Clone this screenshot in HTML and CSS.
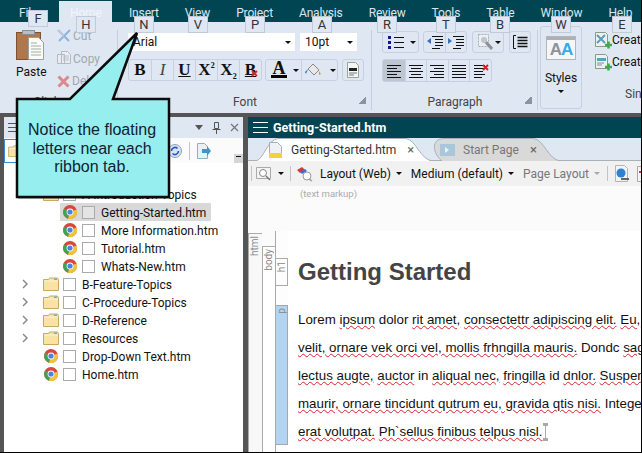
FILE: index.html
```html
<!DOCTYPE html>
<html lang="en">
<head>
    <meta charset="UTF-8">
    <title>Getting-Started.htm</title>
    <link rel="stylesheet" href="styles.css">
</head>
<body>

<svg class="defs" width="0" height="0">
    <symbol id="chrome" viewBox="0 0 14 14">
        <circle cx="7" cy="7" r="7" fill="#d8473b"/>
        <path d="M7 7L1.2 3.6A7 7 0 0 0 5 13.7Z" fill="#3fa353"/>
        <path d="M7 7L13.6 4.6A7 7 0 0 1 5 13.7Z" fill="#f0c33c"/>
        <circle cx="7" cy="7" r="3.400" fill="#fff"/>
        <circle cx="7" cy="7" r="2.600" fill="#4a84e0"/>
    </symbol>
    <symbol id="folder" viewBox="0 0 16 14">
        <path d="M.5 2.500h5l1 -1.500h8l1 1.500v11h-15z" fill="#f8e2a4" stroke="#c9a860"/>
        <path d="M1 4h14" stroke="#fdf3d0"/>
        <path d="M11 1.500h3v1.500h-3z" fill="#6aa9d8"/>
    </symbol>
    <symbol id="lines" viewBox="0 0 16 14">
        <path d="M1 1.500h14M1 4.500h14M1 7.500h14M1 10.500h14M1 13.500h14" stroke="#111"/>
    </symbol>
</svg>

<div class="app">

    <nav class="tabs">
        <span class="tab tab-file">File</span>
        <span class="tab tab-home">Home</span>
        <span class="tab">Insert</span>
        <span class="tab">View</span>
        <span class="tab">Project</span>
        <span class="tab">Analysis</span>
        <span class="tab">Review</span>
        <span class="tab">Tools</span>
        <span class="tab">Table</span>
        <span class="tab">Window</span>
        <span class="tab">Help</span>
    </nav>

    <section class="ribbon">

        <div class="group group-clip">
            <div class="group-body clip-body">
                <div class="paste">
                    <svg width="28" height="31" viewBox="0 0 28 31">
                        <rect x=".5" y="2.500" width="24" height="27" fill="#b0764c" stroke="#7d5233"/>
                        <rect x="6.500" y=".5" width="12" height="4" fill="#b9bec4" stroke="#8a8f95"/>
                        <path d="M12.500 7.500h10l5 5v17h-15z" fill="#fbfcf8" stroke="#9aa39a"/>
                        <path d="M15 13h6M15 16h10M15 19h10M15 22h10M15 25h10" stroke="#9fae9f"/>
                    </svg>
                    <span>Paste</span>
                </div>
                <div class="clip-list">
                    <div class="clip-item">
                        <svg width="14" height="14" viewBox="0 0 14 14"><path d="M1 1l11 11M13 1L2 12" stroke="#8fb3dc" stroke-width="2"/><path d="M1 1l6 6" stroke="#c9ced6" stroke-width="1.500"/></svg>
                        <span>Cut</span>
                    </div>
                    <div class="clip-item">
                        <svg width="14" height="15" viewBox="0 0 14 15"><path d="M.5 3.500h7v9h-7zM4.500 .5h6l3 3v9h-9z" fill="#e9edf3" stroke="#b4bac2"/><path d="M6 5h6M6 7h6M6 9h6" stroke="#bcc2ca"/></svg>
                        <span>Copy</span>
                    </div>
                    <div class="clip-item">
                        <svg width="13" height="13" viewBox="0 0 13 13"><path d="M1.500 1.500l10 10M11.500 1.500l-10 10" stroke="#da8a8a" stroke-width="3"/></svg>
                        <span>Delete</span>
                    </div>
                </div>
            </div>
            <div class="group-label">Clipboard</div>
        </div>

        <div class="group group-font">
            <div class="group-body font-body">
                <div class="combos">
                    <div class="combo combo-font">Arial<i class="caret"></i></div>
                    <div class="combo combo-size">10pt<i class="caret"></i></div>
                </div>
                <div class="tools-row">
                    <div class="btn-set">
                        <span class="btn serif"><b>B</b></span>
                        <span class="btn serif"><em class="thin">I</em></span>
                        <span class="btn serif"><b class="under">U</b></span>
                        <span class="btn serif"><b>X<sup>2</sup></b></span>
                        <span class="btn serif"><b>X<sub>2</sub></b></span>
                        <span class="btn serif"><b class="under">B</b><svg class="mini-x" width="7" height="7" viewBox="0 0 7 7"><path d="M1 1l5 5M6 1L1 6" stroke="#d6262b" stroke-width="1.800"/></svg></span>
                    </div>
                    <div class="btn-set color-set">
                        <span class="btn btn-color serif"><b>A</b><i class="swatch"></i></span>
                        <i class="caret caret-gap"></i>
                        <span class="btn btn-fill">
                            <svg width="17" height="15" viewBox="0 0 17 15"><path d="M8 1l6 6-5 5-6-6z" fill="#e8e8e8" stroke="#888"/><path d="M3 6L0 9l1 2z" fill="#2f6fd0"/><path d="M14 8l2 3-2 1z" fill="#d99a2b"/></svg>
                        </span>
                        <i class="caret caret-gap2"></i>
                    </div>
                    <div class="btn-set doc-set">
                        <span class="btn">
                            <svg width="12" height="16" viewBox="0 0 12 16"><path d="M.5 .5h8l3 3v12h-11z" fill="#f4f6f4" stroke="#9aa39a"/><path d="M2 6h8v3H2z" fill="#222"/><path d="M2 11h8M2 13h5" stroke="#778"/></svg>
                        </span>
                    </div>
                </div>
            </div>
            <div class="group-label">Font<i class="launcher"></i></div>
        </div>

        <div class="group group-para">
            <div class="group-body para-body">
                <div class="tools-row para-top">
                    <div class="btn-set list-set">
                        <svg width="16" height="14" viewBox="0 0 16 14"><path d="M0 1h3v3H0zM0 6h3v3H0zM0 11h3v3H0z" fill="#15158c"/><path d="M6 2.500h10M6 7.500h10M6 12.500h10" stroke="#111"/></svg>
                        <i class="caret"></i>
                    </div>
                    <div class="btn-set">
                        <span class="btn btn-indent"><svg width="16" height="14" viewBox="0 0 16 14"><path d="M5 1.500h11M8 4.500h8M8 7.500h8M8 10.500h8M5 13.500h8" stroke="#111"/><path d="M0 6l4-3v6z" fill="#3a6fc0"/></svg></span>
                        <span class="btn btn-indent"><svg width="16" height="14" viewBox="0 0 16 14"><path d="M5 1.500h11M8 4.500h8M8 7.500h8M8 10.500h8M5 13.500h8" stroke="#111"/><path d="M4 6L0 3v6z" fill="#3a6fc0"/></svg></span>
                    </div>
                    <div class="btn-set wrench-set">
                        <svg width="15" height="16" viewBox="0 0 15 16"><path d="M.5 .5h10v12H.5z" fill="#eceff3" stroke="#a9adb3" stroke-dasharray="2 1"/><path d="M6 6l8 9" stroke="#8d9198" stroke-width="3"/><circle cx="6" cy="6" r="3" fill="#c1c5ca"/></svg>
                        <i class="caret"></i>
                    </div>
                    <div class="btn-set bracket-set">
                        <svg width="15" height="14" viewBox="0 0 15 14"><path d="M3 .5H.5v13H3" fill="none" stroke="#111"/><path d="M4.500 2.500h10M4.500 5.500h10M4.500 8.500h10M4.500 11.500h10" stroke="#111" stroke-width="1.300"/></svg>
                    </div>
                </div>
                <div class="btn-set align-set">
                    <span class="btn btn-on"><svg width="16" height="14" viewBox="0 0 16 14"><path d="M1 1.500h14M1 4.500h10M1 7.500h14M1 10.500h10M1 13.500h14" stroke="#111"/></svg></span>
                    <span class="btn"><svg width="16" height="14" viewBox="0 0 16 14"><path d="M1 1.500h14M3 4.500h10M1 7.500h14M3 10.500h10M1 13.500h14" stroke="#111"/></svg></span>
                    <span class="btn"><svg width="16" height="14" viewBox="0 0 16 14"><path d="M1 1.500h14M5 4.500h10M1 7.500h14M5 10.500h10M1 13.500h14" stroke="#111"/></svg></span>
                    <span class="btn"><svg width="16" height="14" viewBox="0 0 16 14"><use href="#lines"/></svg></span>
                    <span class="btn"><svg width="16" height="14" viewBox="0 0 16 14"><path d="M1 1.500h11M1 4.500h11M1 7.500h9M1 10.500h11M1 13.500h8" stroke="#111"/><path d="M10 1l5 5M15 1l-5 5" stroke="#e2161c" stroke-width="1.800"/></svg></span>
                </div>
            </div>
            <div class="group-label">Paragraph<i class="launcher"></i></div>
        </div>

        <div class="group-styles">
            <div class="styles-box">
                <div class="styles-icon"><span class="a-grey">A</span><span class="a-blue">A</span></div>
                <span>Styles</span>
                <i class="caret"></i>
            </div>
        </div>

        <div class="group-single">
            <div class="create-item">
                <svg width="17" height="17" viewBox="0 0 17 17"><path d="M.5 .5h10l2 2v12H.5z" fill="#eef2ee" stroke="#8a9a8a"/><path d="M2 3l8 8M10 3l-8 8" stroke="#5f9bc0" stroke-width="2"/><path d="M10 13h7M13.500 9.500v7" stroke="#3faa4a" stroke-width="2.500"/></svg>
                <span>Create</span>
            </div>
            <div class="create-item">
                <svg width="17" height="17" viewBox="0 0 17 17"><path d="M.5 .5h10l2 2v12H.5z" fill="#eef2ee" stroke="#8a9a8a"/><path d="M2 4h9v3H2z" fill="#4fa8b4"/><path d="M2 9h7M2 11h5" stroke="#889"/><path d="M10 13h7M13.500 9.500v7" stroke="#3faa4a" stroke-width="2.500"/></svg>
                <span>Create</span>
            </div>
            <div class="single-label">Single</div>
        </div>
    </section>

    <main class="main">

        <aside class="pane">
            <div class="pane-head">
                <div class="burger burger-dark"><i></i><i></i><i></i></div>
                <div class="pane-ctrls">
                    <i class="caret caret-big"></i>
                    <svg width="9" height="12" viewBox="0 0 9 12"><path d="M2.500 .5h4v6h-4zM.5 7.500h8M4.500 8v4" fill="none" stroke="#555"/></svg>
                    <svg width="9" height="9" viewBox="0 0 9 9"><path d="M1 1l7 7M8 1L1 8" stroke="#777" stroke-width="1.200"/></svg>
                </div>
            </div>
            <div class="pane-tools">
                <span class="folder-btn"><svg width="14" height="12"><use href="#folder"/></svg></span>
                <svg class="sync" width="14" height="14" viewBox="0 0 14 14"><circle cx="7" cy="7" r="6.500" fill="#d8e4f4" stroke="#8ea0b8"/><path d="M3.500 7a3.500 3.500 0 0 1 6-2.500M10.500 7a3.500 3.500 0 0 1-6 2.500" fill="none" stroke="#2756c4" stroke-width="1.600"/></svg>
                <i class="sep"></i>
                <svg class="doc-arrow" width="14" height="16" viewBox="0 0 14 16"><path d="M.5 .5h7l3 3v12H.5z" fill="#e8f1f6" stroke="#8fb0c4"/><path d="M5 6h5V3l4 5-4 5v-3H5z" fill="#3a95d0"/></svg>
                <i class="overflow"></i>
            </div>
            <div class="tree">
                <div class="row"><span class="chev">&nbsp;</span><div class="row-body"><svg class="tree-icon" width="16" height="14"><use href="#folder"/></svg><i class="check"></i><span>A-Introduction-Topics</span></div></div>
                <div class="row child"><div class="row-body row-sel"><svg class="tree-icon" width="14" height="14"><use href="#chrome"/></svg><i class="check"></i><span>Getting-Started.htm</span></div></div>
                <div class="row child"><div class="row-body"><svg class="tree-icon" width="14" height="14"><use href="#chrome"/></svg><i class="check"></i><span>More Information.htm</span></div></div>
                <div class="row child"><div class="row-body"><svg class="tree-icon" width="14" height="14"><use href="#chrome"/></svg><i class="check"></i><span>Tutorial.htm</span></div></div>
                <div class="row child"><div class="row-body"><svg class="tree-icon" width="14" height="14"><use href="#chrome"/></svg><i class="check"></i><span>Whats-New.htm</span></div></div>
                <div class="row"><span class="chev"><svg width="6" height="10" viewBox="0 0 6 10"><path d="M1 1l4 4-4 4" fill="none" stroke="#8a8a8a" stroke-width="1.500"/></svg></span><div class="row-body"><svg class="tree-icon" width="16" height="14"><use href="#folder"/></svg><i class="check"></i><span>B-Feature-Topics</span></div></div>
                <div class="row"><span class="chev"><svg width="6" height="10" viewBox="0 0 6 10"><path d="M1 1l4 4-4 4" fill="none" stroke="#8a8a8a" stroke-width="1.500"/></svg></span><div class="row-body"><svg class="tree-icon" width="16" height="14"><use href="#folder"/></svg><i class="check"></i><span>C-Procedure-Topics</span></div></div>
                <div class="row"><span class="chev"><svg width="6" height="10" viewBox="0 0 6 10"><path d="M1 1l4 4-4 4" fill="none" stroke="#8a8a8a" stroke-width="1.500"/></svg></span><div class="row-body"><svg class="tree-icon" width="16" height="14"><use href="#folder"/></svg><i class="check"></i><span>D-Reference</span></div></div>
                <div class="row"><span class="chev"><svg width="6" height="10" viewBox="0 0 6 10"><path d="M1 1l4 4-4 4" fill="none" stroke="#8a8a8a" stroke-width="1.500"/></svg></span><div class="row-body"><svg class="tree-icon" width="16" height="14"><use href="#folder"/></svg><i class="check"></i><span>Resources</span></div></div>
                <div class="row"><span class="chev">&nbsp;</span><div class="row-body"><svg class="tree-icon" width="14" height="14"><use href="#chrome"/></svg><i class="check"></i><span>Drop-Down Text.htm</span></div></div>
                <div class="row"><span class="chev">&nbsp;</span><div class="row-body"><svg class="tree-icon" width="14" height="14"><use href="#chrome"/></svg><i class="check"></i><span>Home.htm</span></div></div>
            </div>
        </aside>

        <section class="work">
            <div class="title-bar">
                <div class="burger"><i></i><i></i><i></i></div>
                <span>Getting-Started.htm</span>
            </div>
            <div class="doc-tabs">
                <div class="doc-tab doc-tab-on">
                    <svg class="tab-shape" width="176" height="23" viewBox="0 0 176 23"><path d="M0 23C8 21 11 2 22 .5H150C160 2 164 21 176 23" fill="#fff" stroke="#a9b0b8"/></svg>
                    <svg class="tab-icon" width="13" height="16" viewBox="0 0 13 16"><path d="M.5 .5h8l4 4v11H.5z" fill="#eef2f4" stroke="#aab"/><path d="M0 11h13v5H0z" fill="#f4d33a"/></svg>
                    <span>Getting-Started.htm</span>
                    <b class="tab-x">×</b>
                </div>
                <div class="doc-tab doc-tab-off">
                    <svg class="tab-shape" width="130" height="23" viewBox="0 0 130 23"><path d="M12 23C2 15 1 .5 14 .5H104C114 2 118 21 130 23" fill="#d9d9d9" stroke="#a9b0b8"/></svg>
                    <svg class="tab-icon" width="15" height="12" viewBox="0 0 15 12"><path d="M0 0h15v12H0z" fill="#a9c6da"/><path d="M5 3l4 3-4 3z" fill="#eaf3f8"/></svg>
                    <span>Start Page</span>
                    <b class="tab-x">×</b>
                </div>
            </div>
            <div class="doc-tools">
                <i class="sep"></i>
                <svg class="zoom-icon" width="17" height="14" viewBox="0 0 17 14"><path d="M.5 .5h14v11H.5z" fill="#f4f4f4" stroke="#aaa"/><circle cx="7" cy="6" r="3.500" fill="#fff" stroke="#888"/><path d="M10 9l4 4" stroke="#777" stroke-width="1.500"/></svg>
                <i class="caret"></i>
                <i class="sep"></i>
                <svg class="layout-icon" width="17" height="16" viewBox="0 0 17 16"><path d="M1 4l5-3 3 3-5 3z" fill="#d23b3b"/><path d="M4 6l5-3 2 2-5 3z" fill="#3b6fd2"/><circle cx="11" cy="10" r="4" fill="#fff" stroke="#9a9a9a"/><path d="M13 13l3 2" stroke="#9a9a9a" stroke-width="1.500"/></svg>
                <span class="tool-text">Layout (Web)</span><i class="caret"></i>
                <span class="tool-text">Medium (default)</span><i class="caret"></i>
                <span class="tool-text tool-off">Page Layout</span><i class="caret caret-off"></i>
                <i class="sep sep-last"></i>
                <svg class="globe-doc" width="15" height="18" viewBox="0 0 15 18"><path d="M.5 .5h9l3 3v13H.5z" fill="#f2f4f6" stroke="#b0b5bb"/><circle cx="6" cy="8" r="4.500" fill="#2f82d0"/><path d="M6 14h8" stroke="#666" stroke-width="2"/></svg>
                <svg class="red-doc" width="12" height="16" viewBox="0 0 12 16"><path d="M.5 .5h9l2 2v13H.5z" fill="#f4f4f4" stroke="#aaa"/><path d="M2 6h6" stroke="#d33" stroke-width="2"/></svg>
            </div>
            <div class="editor">
                <div class="markup-note">(text markup)</div>
                <div class="doc">
                    <div class="tag-col tag-html"><span class="tag-name">html</span></div>
                    <div class="tag-col tag-body"><span class="tag-name">body</span></div>
                    <div class="tag-blocks">
                        <div class="tag-h1"><span class="tag-name">h1</span></div>
                        <div class="tag-p"><span class="tag-name">p</span></div>
                    </div>
                    <div class="page">
                        <h1>Getting Started</h1>
                        <div class="para">
                            <div>Lorem <u>ipsum</u> dolor <u>rit amet,</u> <u>consectettr adipiscing elit.</u> <u>Eu,</u> sed</div>
                            <div><u>velit, ornare vek orci vel, mollis frhngilla mauris.</u> Dondc <u>sagittis</u></div>
                            <div><u>lectus augte,</u> <u>auctor</u> in <u>aliqual nec,</u> <u>fringilla</u> id <u>dnlor.</u> <u>Suspendisse</u></div>
                            <div><u>maurir, ornare tincidunt qutrum eu, gravida qtis nisi.</u> Integer</div>
                            <div><u>erat volutpat.</u> <u>Ph`sellus finibus telpus nisl.</u><i class="end-mark"></i></div>
                        </div>
                    </div>
                </div>
            </div>
        </section>
    </main>

    <span class="key key-f">F</span>
    <span class="key key-h">H</span>
    <span class="key key-n">N</span>
    <span class="key key-v">V</span>
    <span class="key key-p">P</span>
    <span class="key key-a">A</span>
    <span class="key key-r">R</span>
    <span class="key key-t">T</span>
    <span class="key key-b">B</span>
    <span class="key key-w">W</span>
    <span class="key key-e">E</span>

    <div class="callout">
        <svg width="160" height="172" viewBox="0 0 160 172">
            <path d="M2 70H55L122 4L98 70H154V169H2Z" fill="#000" opacity=".3" transform="translate(1 1)"/>
            <path d="M2 70H55L122 4L98 70H154V168H2Z" fill="#96efee" stroke="#0c0c0c" stroke-width="2.500"/>
        </svg>
        <p>Notice the floating letters near each ribbon tab.</p>
    </div>
</div>

</body>
</html>
```

FILE: styles.css
```css
* {
    box-sizing: border-box;
}

html, body {
    margin: 0;
    overflow: hidden;
}

body {
    font-family: Roboto, "Noto Sans", sans-serif;
    font-size: 12px;
    color: #111;
}

i {
    font-style: normal;
}

svg {
    display: block;
    flex: none;
}

.defs {
    position: absolute;
}

.app {
    position: relative;
    width: 642px;
    height: 453px;
    overflow: hidden;
    display: flex;
    flex-direction: column;
    background: #555;
    border-right: 1px solid #000;
    border-bottom: 1px solid #000;
}

/* top tabs */
.tabs {
    display: flex;
    height: 22px;
    padding: 1px 0 0 6px;
    background: #014553;
    flex: none;
}

.tab {
    padding: 4px 13px 0;
    color: #dbe5ee;
    line-height: 17px;
    letter-spacing: -.15px;
    flex: none;
}

.tab-file {
    width: 53px;
}

.tab-home {
    width: 53px;
    margin-right: 4px;
    padding: 4px 11px 0;
    background: #dfe7f3;
    color: #f2f5fa;
}

/* ribbon */
.ribbon {
    display: flex;
    height: 91px;
    background: #dfe7f3;
    flex: none;
    overflow: hidden;
}

.group {
    display: flex;
    flex-direction: column;
    position: relative;
    flex: none;
}

.group::after {
    content: "";
    position: absolute;
    right: 0;
    top: 8px;
    bottom: 3px;
    width: 1px;
    background: #c4cedc;
}

.group-body {
    height: 70px;
}

.group-label {
    position: relative;
    height: 20px;
    text-align: center;
    color: #444;
    line-height: 20px;
}

.launcher {
    position: absolute;
    right: 6px;
    top: 5px;
    width: 7px;
    height: 7px;
    border: 1px solid #8a94a0;
    border-width: 0 1px 1px 0;
    background: linear-gradient(135deg, transparent 50%, #8a94a0 50%);
}

.group-clip {
    width: 118px;
}

.clip-body {
    display: flex;
}

.paste {
    width: 47px;
    padding: 8px 0 0 16px;
}

.paste span {
    display: block;
    margin: 3px 0 0 0;
    line-height: 16px;
}

.clip-list {
    padding: 3px 0 0 10px;
}

.clip-item {
    display: flex;
    align-items: center;
    height: 22.500px;
    color: #a2a8b0;
}

.clip-item span {
    margin-left: 2px;
}

.group-font {
    width: 254px;
}

.font-body {
    padding: 11px 0 0 10px;
}

.combos {
    display: flex;
    gap: 5px;
}

.combo {
    position: relative;
    height: 18px;
    padding-left: 5px;
    background: #fff;
    line-height: 19px;
}

.combo .caret {
    position: absolute;
    right: 4px;
    top: 8px;
}

.combo-font {
    width: 167px;
}

.combo-size {
    width: 57px;
}

.caret {
    display: inline-block;
    width: 0;
    height: 0;
    flex: none;
    border-left: 3px solid transparent;
    border-right: 3px solid transparent;
    border-top: 3px solid #111;
}

.caret-off {
    border-top-color: #a8a8a8;
}

.caret-big {
    border-left-width: 4px;
    border-right-width: 4px;
    border-top: 5px solid #555;
}

.tools-row {
    display: flex;
}

.font-body .tools-row {
    margin-top: 8px;
    gap: 3px;
}

.btn-set {
    display: flex;
    align-items: center;
    height: 22px;
    border: 1px solid #c6d0de;
    border-radius: 3px;
}

.btn {
    position: relative;
    display: flex;
    align-items: center;
    justify-content: center;
    width: 22px;
    height: 100%;
    border-left: 1px solid #c6d0de;
}

.btn:first-child {
    border-left: 0;
}

.serif {
    font-family: "Liberation Serif", serif;
    font-size: 17px;
}

.thin {
    color: #444;
}

.under {
    text-decoration: underline;
}

.serif sup, .serif sub {
    font-size: 8px;
    line-height: 0;
}

.mini-x {
    position: absolute;
    right: 3px;
    bottom: 3px;
}

.color-set {
    width: 73px;
    margin-right: 1px;
}

.btn-color {
    flex-direction: column;
    border-left: 0;
    width: 26px;
    line-height: 13px;
    font-size: 18px;
}

.swatch {
    display: block;
    width: 16px;
    height: 3px;
    background: #000;
}

.caret-gap {
    margin: 0 2px 0 1px;
}

.btn-fill {
    width: 27px;
    justify-content: flex-start;
    padding-left: 3px;
}

.caret-gap2 {
    margin-left: 2px;
}

.doc-set .btn {
    width: 20px;
}

.group-para {
    width: 166px;
}

.para-body {
    padding: 9px 0 0 10px;
}

.para-top {
    gap: 4px;
}

.list-set {
    width: 37px;
    padding-left: 5px;
    gap: 6px;
}

.btn-indent {
    width: 21px;
}

.wrench-set {
    width: 32px;
    padding-left: 5px;
    gap: 2px;
    margin-left: 1px;
}

.bracket-set {
    width: 22px;
    padding-left: 3px;
    margin-left: 1px;
}

.align-set {
    width: 110px;
    margin-top: 6px;
    height: 23px;
}

.btn-on {
    background: #bec6d2;
}

.group-styles {
    width: 55px;
    padding: 4px 0 0 2px;
    flex: none;
}

.styles-box {
    display: flex;
    flex-direction: column;
    align-items: center;
    width: 42px;
    height: 83px;
    padding-top: 9px;
    border: 1px solid #c6d0de;
    border-radius: 3px;
}

.styles-box span {
    margin-top: 10px;
    line-height: 16px;
}

.styles-box .caret {
    margin-top: 4px;
}

.styles-icon {
    width: 30px;
    height: 24px;
    padding-top: 3px;
    background: linear-gradient(#aeb1b4 0, #aeb1b4 3px, #f5f6f8 3px);
    border: 1px solid #b2b6bb;
    text-align: center;
    font-family: "Liberation Sans", sans-serif;
    font-weight: bold;
    font-size: 17px;
    line-height: 19px;
    letter-spacing: -1px;
}

.a-grey {
    color: #8e9298;
}

.a-blue {
    color: #39a9e8;
}

.group-single {
    padding: 7px 0 0 2px;
    flex: none;
    width: 49px;
}

.create-item {
    display: flex;
    align-items: center;
    height: 22px;
}

.single-label {
    margin: 13px 0 0 30px;
    color: #444;
    line-height: 16px;
}

/* panes */
.main {
    display: flex;
    flex: 1;
    min-height: 0;
    margin-top: 4px;
    padding-left: 4px;
    gap: 5px;
}

.pane {
    width: 239px;
    background: #fff;
}

.pane-head {
    display: flex;
    align-items: center;
    justify-content: space-between;
    height: 21px;
    padding: 0 4px;
    background: #dfe7f3;
}

.burger {
    width: 15px;
}

.burger i {
    display: block;
    height: 1px;
    margin-bottom: 4px;
    background: #fff;
}

.burger i:last-child {
    margin-bottom: 0;
}

.burger-dark {
    width: 11px;
}

.burger-dark i {
    background: #555;
    margin-bottom: 3px;
}

.pane-ctrls {
    display: flex;
    align-items: center;
    gap: 9px;
}

.pane-tools {
    position: relative;
    display: flex;
    align-items: center;
    height: 25px;
    background: #fbfbfb;
}

.folder-btn {
    width: 20px;
    height: 24px;
    padding: 5px 0 0 3px;
    border: 1px solid #3c8ad6;
    background: #fff;
}

.sync {
    margin-left: 144px;
}

.sep {
    display: block;
    width: 1px;
    height: 18px;
    background: #c4c4c4;
    flex: none;
}

.pane-tools .sep {
    margin-left: 7px;
}

.doc-arrow {
    margin-left: 7px;
}

.overflow {
    position: absolute;
    right: 0;
    bottom: 0;
    width: 9px;
    height: 9px;
    background: linear-gradient(#111, #111) center 2px / 5px 1px no-repeat, #d6d6d6;
}

.tree {
    padding-top: 22px;
}

.row {
    display: flex;
    height: 18px;
}

.chev {
    display: flex;
    align-items: center;
    width: 37px;
    padding-left: 18px;
}

.child {
    padding-left: 56px;
}

.row-body {
    display: flex;
    align-items: center;
    height: 18px;
    padding: 0 5px 0 2px;
}

.row-body span {
    padding-top: 1px;
}

.tree-icon {
    width: 16px;
}

.check {
    width: 13px;
    height: 13px;
    margin: 0 6px 0 4px;
    border: 1px solid #aaa;
    background: #fff;
}

.row-sel {
    background: #d9d9d9;
}

.row-sel .check {
    background: #e4e4e4;
}

/* editor side */
.work {
    display: flex;
    flex-direction: column;
    width: 393px;
    background: #fff;
}

.title-bar {
    display: flex;
    align-items: center;
    gap: 5px;
    height: 21px;
    padding-left: 5px;
    background: #014553;
    color: #fff;
    font-size: 12.500px;
    font-weight: bold;
    flex: none;
}

.doc-tabs {
    display: flex;
    height: 23px;
    padding-left: 8px;
    background: #dfe7f3;
    border-bottom: 1px solid #a9b0b8;
    flex: none;
}

.doc-tab {
    position: relative;
    display: flex;
    align-items: center;
    height: 23px;
    color: #333;
    flex: none;
}

.doc-tab > * {
    position: relative;
}

.tab-shape {
    position: absolute !important;
    left: 0;
    top: 0;
}

.doc-tab-on {
    width: 174px;
    padding-left: 13px;
}

.doc-tab-on .tab-icon {
    margin-right: 9px;
}

.doc-tab-off {
    width: 130px;
    padding-left: 10px;
    color: #777;
}

.doc-tab-off .tab-icon {
    margin-right: 8px;
}

.tab-x {
    margin-left: 11px;
    font-weight: normal;
    color: #666;
    font-size: 13px;
}

.doc-tools {
    display: flex;
    align-items: center;
    height: 25px;
    padding-left: 3px;
    background: #f1f1f1;
    overflow: hidden;
    flex: none;
}

.zoom-icon {
    margin: 0 5px 0 4px;
}

.doc-tools .sep {
    height: 15px;
}

.doc-tools > .caret {
    margin-right: 9px;
}

.doc-tools > .sep + .layout-icon {
    margin-left: 5px;
}

.zoom-icon + .caret {
    margin-right: 6px !important;
}

.layout-icon {
    margin-right: 7px;
}

.tool-text {
    margin-right: 5px;
    white-space: nowrap;
    color: #111;
}

.tool-off {
    color: #777;
}

.caret-off {
    margin-right: 7px !important;
}

.globe-doc {
    margin-left: 7px;
}

.red-doc {
    margin-left: 7px;
}

.editor {
    flex: 1;
    min-height: 0;
    background: #fbfbfb;
    overflow: hidden;
}

.markup-note {
    height: 45px;
    padding: 1px 0 0 52px;
    font-size: 9.500px;
    line-height: 14px;
    color: #aaa;
}

.doc {
    display: flex;
    height: 230px;
}

.tag-name {
    display: block;
    writing-mode: vertical-rl;
    transform: rotate(180deg);
    font-size: 10px;
    line-height: 12px;
    color: #888;
    padding-bottom: 2px;
}

.tag-col {
    width: 14px;
    border: 1px solid #aaa;
    border-bottom: 0;
    border-right: 0;
}

.tag-html {
    margin-top: 2px;
    background: #f8f8f8;
}

.tag-body {
    width: 13px;
    margin-top: 15px;
    background: #fff;
}

.tag-blocks {
    width: 13px;
    background: #fdfdfd;
    flex: none;
    border-left: 1px solid #aaa;
}

.tag-h1 {
    height: 28px;
    margin-top: 27px;
    border: 1px solid #aaa;
    border-left: 0;
}

.tag-p {
    height: 140px;
    margin-top: 19px;
    background: #b3d4f1;
    border: 1px solid #a0a8b0;
    border-left: 0;
}

.page {
    flex: 1;
    min-width: 0;
    padding: 27px 0 0 10px;
    background: #fff;
    overflow: hidden;
    font-family: "Liberation Sans", sans-serif;
}

.page h1 {
    margin: 0 0 20px;
    font-size: 24px;
    line-height: 28px;
    color: #444;
}

.para {
    font-size: 13.330px;
    line-height: 28px;
    white-space: nowrap;
}

.para u {
    text-decoration: underline wavy #d8232a 1px;
    text-underline-offset: 1px;
}

.end-mark {
    display: inline-block;
    width: 5px;
    height: 18px;
    margin-left: 1px;
    vertical-align: -5px;
    border: solid #aaa;
    border-width: 3px 0;
    background: linear-gradient(#aaa, #aaa) center / 1px 100% no-repeat;
}

/* floating key letters */
.key {
    position: absolute;
    top: 16px;
    width: 20px;
    height: 17px;
    background: #dfe7f3;
    border: 1px solid #c0cad8;
    text-align: center;
    font-size: 13px;
    line-height: 15px;
    color: #333;
}

.key-f { left: 28px; top: 10px; }
.key-h { left: 76px; }
.key-n { left: 134px; }
.key-v { left: 188px; }
.key-p { left: 245px; }
.key-a { left: 312px; }
.key-r { left: 377px; }
.key-t { left: 436px; }
.key-b { left: 490px; }
.key-w { left: 551px; }
.key-e { left: 612px; }

/* callout */
.callout {
    position: absolute;
    left: 15px;
    top: 29px;
    width: 160px;
    height: 172px;
}

.callout p {
    position: absolute;
    left: 6px;
    top: 92px;
    width: 142px;
    margin: 0;
    text-align: center;
    font-family: "Liberation Sans", sans-serif;
    font-size: 16px;
    line-height: 18.500px;
    color: #123;
}
```
